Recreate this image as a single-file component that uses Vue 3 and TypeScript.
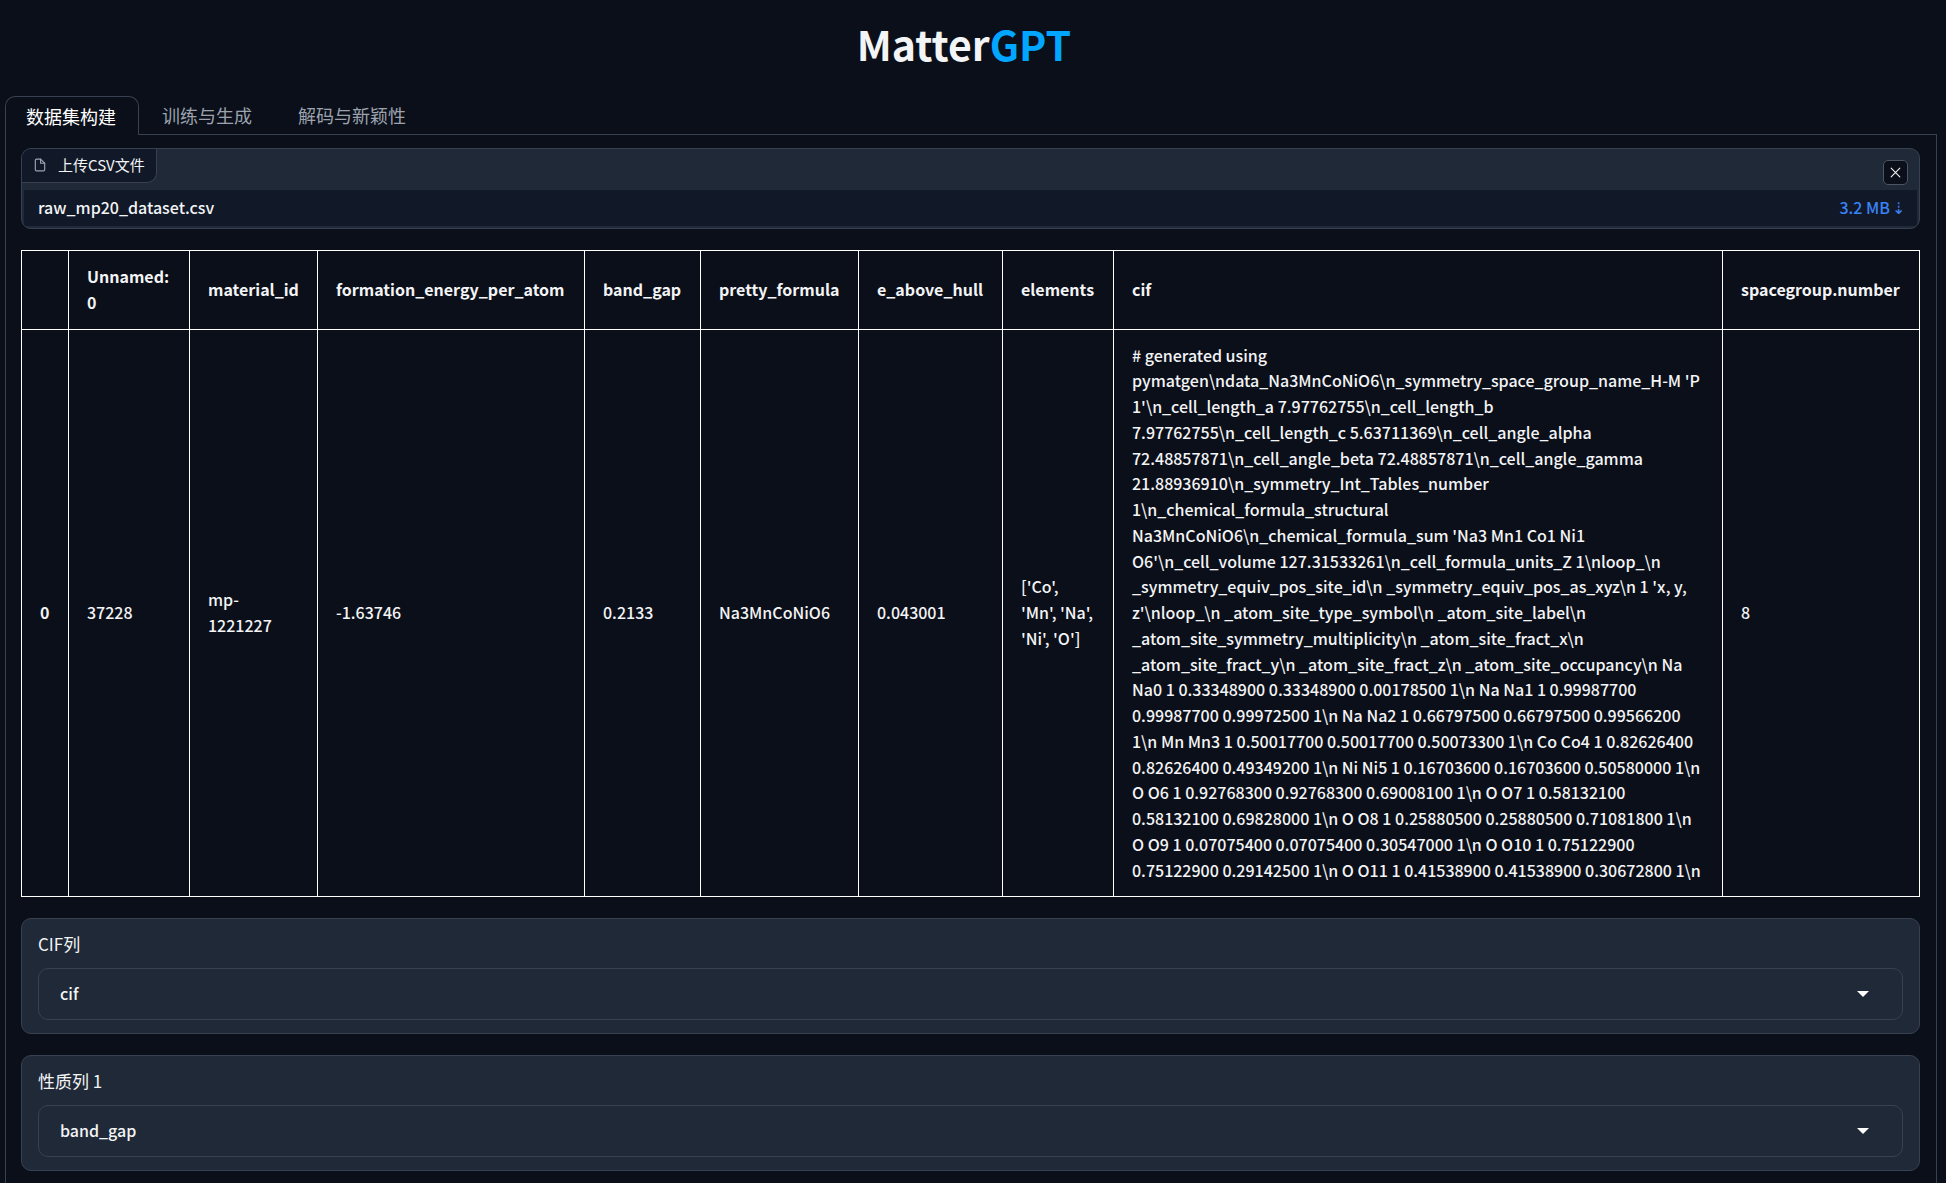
<script setup lang="ts">
import { ref } from 'vue'

const tabs = ['数据集构建', '训练与生成', '解码与新颖性']
const activeTab = ref(0)

const columns = [
  { name: 'Unnamed: 0', width: 121 },
  { name: 'material_id', width: 128 },
  { name: 'formation_energy_per_atom', width: 267 },
  { name: 'band_gap', width: 116 },
  { name: 'pretty_formula', width: 158 },
  { name: 'e_above_hull', width: 144 },
  { name: 'elements', width: 111 },
  { name: 'cif', width: 0 },
  { name: 'spacegroup.number', width: 197 },
]

const cif = String.raw`# generated using pymatgen\ndata_Na3MnCoNiO6\n_symmetry_space_group_name_H-M 'P 1'\n_cell_length_a 7.97762755\n_cell_length_b 7.97762755\n_cell_length_c 5.63711369\n_cell_angle_alpha 72.48857871\n_cell_angle_beta 72.48857871\n_cell_angle_gamma 21.88936910\n_symmetry_Int_Tables_number 1\n_chemical_formula_structural Na3MnCoNiO6\n_chemical_formula_sum 'Na3 Mn1 Co1 Ni1 O6'\n_cell_volume 127.31533261\n_cell_formula_units_Z 1\nloop_\n _symmetry_equiv_pos_site_id\n _symmetry_equiv_pos_as_xyz\n 1 'x, y, z'\nloop_\n _atom_site_type_symbol\n _atom_site_label\n _atom_site_symmetry_multiplicity\n _atom_site_fract_x\n _atom_site_fract_y\n _atom_site_fract_z\n _atom_site_occupancy\n Na Na0 1 0.33348900 0.33348900 0.00178500 1\n Na Na1 1 0.99987700 0.99987700 0.99972500 1\n Na Na2 1 0.66797500 0.66797500 0.99566200 1\n Mn Mn3 1 0.50017700 0.50017700 0.50073300 1\n Co Co4 1 0.82626400 0.82626400 0.49349200 1\n Ni Ni5 1 0.16703600 0.16703600 0.50580000 1\n O O6 1 0.92768300 0.92768300 0.69008100 1\n O O7 1 0.58132100 0.58132100 0.69828000 1\n O O8 1 0.25880500 0.25880500 0.71081800 1\n O O9 1 0.07075400 0.07075400 0.30547000 1\n O O10 1 0.75122900 0.75122900 0.29142500 1\n O O11 1 0.41538900 0.41538900 0.30672800 1\n`

const rows = [
  ['37228', 'mp-1221227', '-1.63746', '0.2133', 'Na3MnCoNiO6', '0.043001', "['Co', 'Mn', 'Na', 'Ni', 'O']", cif, '8'],
]

const fields = ref([
  { id: 'cif-column', label: 'CIF列', value: 'cif' },
  { id: 'property-column-1', label: '性质列 1', value: 'band_gap' },
])
</script>

<template>
  <div class="app">
    <header class="header">
      <h1 class="title">Matter<span class="accent">GPT</span></h1>
    </header>

    <nav class="tabs" role="tablist">
      <button
        v-for="(tab, i) in tabs"
        :key="tab"
        type="button"
        role="tab"
        class="tab"
        :class="{ active: i === activeTab }"
        :aria-selected="i === activeTab"
        @click="activeTab = i"
      >{{ tab }}</button>
    </nav>

    <main class="panel">
      <section class="block file">
        <div class="file-head">
          <div class="file-label">
            <svg class="file-icon" viewBox="0 0 24 24" aria-hidden="true">
              <path d="M13 2H6a2 2 0 0 0-2 2v16a2 2 0 0 0 2 2h12a2 2 0 0 0 2-2V9z" />
              <path d="M13 2v7h7" />
            </svg>
            <span>上传CSV文件</span>
          </div>
          <button type="button" class="clear" aria-label="清除">
            <svg viewBox="0 0 24 24" aria-hidden="true">
              <path d="M4 4l16 16M20 4L4 20" />
            </svg>
          </button>
        </div>
        <div class="file-row">
          <span>raw_mp20_dataset.csv</span>
          <a class="download" href="#">3.2 MB<span class="arrow">⇣</span></a>
        </div>
      </section>

      <table class="data">
        <colgroup>
          <col style="width: 47px" />
          <col v-for="c in columns" :key="c.name" :style="c.width ? { width: c.width + 'px' } : {}" />
        </colgroup>
        <thead>
          <tr>
            <th></th>
            <th v-for="c in columns" :key="c.name" scope="col">{{ c.name }}</th>
          </tr>
        </thead>
        <tbody>
          <tr v-for="(row, r) in rows" :key="r">
            <th scope="row">{{ r }}</th>
            <td v-for="(cell, c) in row" :key="c">{{ cell }}</td>
          </tr>
        </tbody>
      </table>

      <section v-for="f in fields" :key="f.id" class="block field">
        <label :for="f.id">{{ f.label }}</label>
        <div class="select-wrap">
          <select :id="f.id" v-model="f.value">
            <option v-for="c in columns" :key="c.name" :value="c.name">{{ c.name }}</option>
          </select>
          <svg class="caret" viewBox="0 0 12 6" aria-hidden="true"><path d="M0 0h12L6 6z" /></svg>
        </div>
      </section>
    </main>
  </div>
</template>

<style>
body {
  background: #0b0f19;
}
</style>

<style scoped>
.app,
.app * {
  box-sizing: border-box;
}

.app {
  display: flex;
  flex-direction: column;
  min-height: 100vh;
  padding: 0 9px 0 5px;
  color: #f3f4f6;
  font-family: "Noto Sans CJK SC", "Noto Sans", sans-serif;
  font-size: 16px;
  font-weight: 500;
  line-height: 1.61;
}

.header {
  padding: 13px 14px 23px 0;
}

.title {
  margin: 0;
  font-size: 41px;
  font-weight: 700;
  line-height: 60px;
  text-align: center;
}

.accent {
  color: #00a6ff;
}

.tabs {
  display: flex;
  gap: 2px;
  border-bottom: 1px solid #374151;
}

.tab {
  height: 38px;
  margin-bottom: -1px;
  padding: 0 22px 1px 20px;
  border: 1px solid transparent;
  border-bottom: 0;
  border-radius: 10px 10px 0 0;
  background: transparent;
  color: #9ca3af;
  font: inherit;
  font-size: 18px;
  font-weight: 400;
  line-height: 24px;
}

.tab.active {
  height: 39px;
  border-color: #374151;
  background: #0b0f19;
  color: #fff;
}

.panel {
  display: flex;
  flex: 1;
  flex-direction: column;
  gap: 21px;
  padding: 13px 16px 11px 15px;
  border: solid #374151;
  border-width: 0 1px;
}

.block {
  border: 1px solid #374151;
  border-radius: 10px;
  background: #1f2937;
}

.file {
  overflow: hidden;
  padding-bottom: 2px;
}

.file-head {
  display: flex;
  align-items: flex-start;
  justify-content: space-between;
  height: 41px;
}

.file-label {
  display: flex;
  align-items: center;
  gap: 11px;
  height: 34px;
  padding: 0 11px 1px;
  border: solid #374151;
  border-width: 0 1px 1px 0;
  border-radius: 0 0 10px 0;
  background: #111827;
  font-size: 15px;
  font-weight: 400;
}

.file-icon {
  width: 14px;
  height: 14px;
  fill: none;
  stroke: #9ca3af;
  stroke-width: 2;
  stroke-linecap: round;
  stroke-linejoin: round;
}

.clear {
  display: flex;
  align-items: center;
  justify-content: center;
  width: 25px;
  height: 25px;
  margin: 11px 11px 0 0;
  padding: 0;
  border: 1px solid #4b5563;
  border-radius: 5px;
  background: #0b0f19;
}

.clear svg {
  width: 13px;
  height: 13px;
  fill: none;
  stroke: #f3f4f6;
  stroke-width: 2;
  stroke-linecap: round;
}

.file-row {
  display: flex;
  align-items: center;
  justify-content: space-between;
  height: 36px;
  margin: 0 2px;
  padding: 0 12px 0 14px;
  background: #111827;
}

.download {
  display: flex;
  gap: 2px;
  color: #3b82f6;
  text-decoration: none;
}

.data {
  width: 100%;
  border-collapse: collapse;
}

.data th,
.data td {
  padding: 13px 18px;
  border: 1px solid #fff;
  text-align: left;
  vertical-align: middle;
}

.data th {
  font-weight: 700;
}

.field {
  display: flex;
  flex-direction: column;
  gap: 11px;
  padding: 12px 16px 13px;
}

.field label {
  font-size: 17px;
  font-weight: 400;
  line-height: 26px;
}

.select-wrap {
  position: relative;
}

select {
  display: block;
  width: 100%;
  height: 52px;
  padding: 0 21px;
  border: 1px solid #374151;
  border-radius: 10px;
  appearance: none;
  background: #1f2937;
  color: #f3f4f6;
  font: inherit;
}

.caret {
  position: absolute;
  top: 23px;
  right: 34px;
  width: 12px;
  height: 6px;
  fill: #fff;
  pointer-events: none;
}
</style>
